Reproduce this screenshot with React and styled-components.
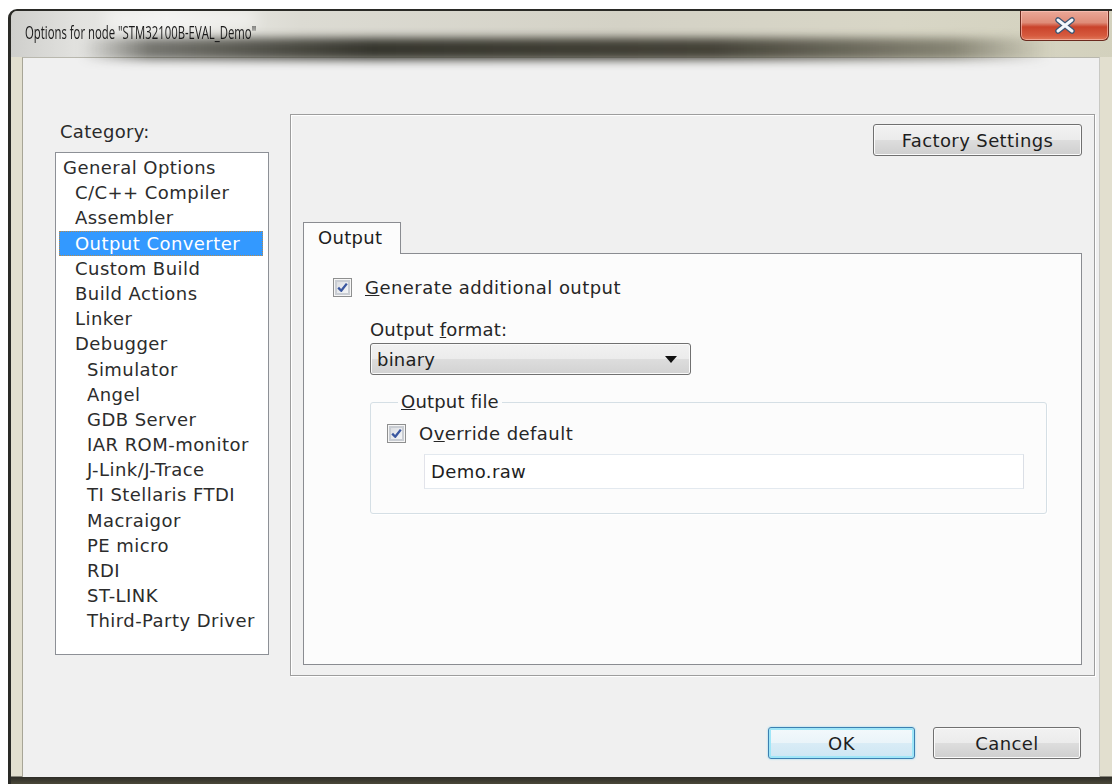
import React from 'react';
import styled, { createGlobalStyle } from 'styled-components';

const GlobalStyle = createGlobalStyle`
  html, body {
    margin: 0;
    padding: 0;
    background: #ffffff;
  }
  body {
    font-family: "DejaVu Sans", Verdana, sans-serif;
    overflow: hidden;
  }
`;

const categories = [
  { label: 'General Options', level: 0 },
  { label: 'C/C++ Compiler', level: 1 },
  { label: 'Assembler', level: 1 },
  { label: 'Output Converter', level: 1, selected: true },
  { label: 'Custom Build', level: 1 },
  { label: 'Build Actions', level: 1 },
  { label: 'Linker', level: 1 },
  { label: 'Debugger', level: 1 },
  { label: 'Simulator', level: 2 },
  { label: 'Angel', level: 2 },
  { label: 'GDB Server', level: 2 },
  { label: 'IAR ROM-monitor', level: 2 },
  { label: 'J-Link/J-Trace', level: 2 },
  { label: 'TI Stellaris FTDI', level: 2 },
  { label: 'Macraigor', level: 2 },
  { label: 'PE micro', level: 2 },
  { label: 'RDI', level: 2 },
  { label: 'ST-LINK', level: 2 },
  { label: 'Third-Party Driver', level: 2 },
];

export default function App() {
  return (
    <>
      <GlobalStyle />
      <Screen>
        <Window>
          <TitleBar>
            <Title>Options for node "STM32100B-EVAL_Demo"</Title>
            <CloseButton aria-label="Close">
              <svg width="24" height="17" viewBox="0 0 24 17">
                <path d="M5 3 L19 14 M19 3 L5 14" stroke="#3b5674" strokeWidth="5.5" strokeLinecap="round" />
                <path d="M5 3 L19 14 M19 3 L5 14" stroke="#f4f7fb" strokeWidth="3" strokeLinecap="round" />
              </svg>
            </CloseButton>
          </TitleBar>
          <FrameRow>
            <Client>
              <Body>
                <LeftColumn>
                  <Caption>Category:</Caption>
                  <ListBox>
                    {categories.map((c) => (
                      <ListItem key={c.label} $level={c.level} $selected={c.selected}>
                        {c.label}
                      </ListItem>
                    ))}
                  </ListBox>
                </LeftColumn>
                <SettingsPanel>
                  <PanelTop>
                    <PushButton $width={209}>Factory Settings</PushButton>
                  </PanelTop>
                  <TabStrip>
                    <Tab>Output</Tab>
                  </TabStrip>
                  <TabPage>
                    <CheckRow>
                      <CheckBox />
                      <span><u>G</u>enerate additional output</span>
                    </CheckRow>
                    <Indented>
                      <FieldLabel>Output <u>f</u>ormat:</FieldLabel>
                      <ComboBox>
                        <span>binary</span>
                        <ComboArrow />
                      </ComboBox>
                      <GroupBox>
                        <GroupLegend><u>O</u>utput file</GroupLegend>
                        <CheckRow>
                          <CheckBox />
                          <span>O<u>v</u>erride default</span>
                        </CheckRow>
                        <TextField>Demo.raw</TextField>
                      </GroupBox>
                    </Indented>
                  </TabPage>
                </SettingsPanel>
              </Body>
              <Footer>
                <PushButton $width={147} $default>OK</PushButton>
                <PushButton $width={148}>Cancel</PushButton>
              </Footer>
            </Client>
          </FrameRow>
        </Window>
      </Screen>
    </>
  );
}

function CheckBox() {
  return (
    <CheckFrame>
      <svg width="13" height="13" viewBox="0 0 13 13">
        <path d="M2.2 6.6 L5.2 9.8 L10.8 2.6" fill="none" stroke="#3a57a0" strokeWidth="2.3" strokeLinejoin="round" />
      </svg>
    </CheckFrame>
  );
}

function ComboArrow() {
  return (
    <svg width="12" height="7" viewBox="0 0 12 7">
      <path d="M0 0 H12 L6 7 Z" fill="#111" />
    </svg>
  );
}

const Screen = styled.div`
  width: 1112px;
  height: 784px;
  padding: 9px 0 0 8px;
  box-sizing: border-box;
  overflow: hidden;
`;

const Window = styled.div`
  width: 1112px;
  height: 775px;
  box-sizing: border-box;
  display: flex;
  flex-direction: column;
  border-top: 2px solid #2a2a26;
  border-left: 3px solid #2a2a26;
  border-radius: 9px 0 0 0;
  background: linear-gradient(to bottom, #dedcd0 0%, #e4e2d6 60%, #d9d7c8 100%);
  overflow: hidden;
`;

const TitleBar = styled.div`
  position: relative;
  height: 46px;
  flex-shrink: 0;
  display: flex;
  align-items: flex-start;
  justify-content: space-between;
  padding: 0 10px 0 14px;
  background: linear-gradient(to right, #cfcfcc 0%, #e2e2df 6%, #ededea 14%, #dcdbd3 26%, #d4d2c6 55%, #d8d6c6 80%, #d3d1bd 100%);

  &::before {
    content: '';
    position: absolute;
    left: 95px;
    width: 150px;
    top: 0;
    height: 16px;
    background: rgba(255, 255, 255, 0.55);
    filter: blur(8px);
    pointer-events: none;
  }

  &::after {
    content: '';
    position: absolute;
    left: 70px;
    right: 70px;
    bottom: -3px;
    height: 22px;
    background: linear-gradient(to right, rgba(40, 40, 32, 0) 0%, rgba(40, 40, 32, 0.6) 7%, rgba(30, 30, 22, 0.88) 30%, rgba(42, 40, 30, 0.85) 65%, rgba(70, 68, 52, 0.55) 90%, rgba(70, 68, 52, 0) 100%);
    filter: blur(5px);
    pointer-events: none;
  }
`;

const Title = styled.div`
  position: relative;
  z-index: 1;
  margin-top: 10px;
  font-family: "Open Sans", "Noto Sans", sans-serif;
  font-size: 18px;
  line-height: 22px;
  color: #1a1a1a;
  white-space: nowrap;
  transform: scaleX(0.63);
  transform-origin: left center;
`;

const CloseButton = styled.button`
  position: relative;
  z-index: 1;
  width: 89px;
  height: 30px;
  margin-right: 1px;
  padding: 0;
  border: 1px solid #6b2a1e;
  border-top: 0;
  border-radius: 0 0 6px 6px;
  background: linear-gradient(to bottom, #eaa898 0%, #df8c78 40%, #c9432b 55%, #d65a3e 85%, #e07a5c 100%);
  box-shadow: inset 0 0 0 1px rgba(255, 200, 190, 0.6);
  display: flex;
  align-items: center;
  justify-content: center;
`;

const FrameRow = styled.div`
  flex: 1;
  display: flex;
  padding: 0 0 7px 11px;
  background: linear-gradient(to bottom, #e2dfcf 0%, #e2dfcf calc(100% - 8px), #2e2d27 calc(100% - 7px), #4a4838 100%);
`;

const Client = styled.div`
  width: 1078px;
  height: 720px;
  box-sizing: border-box;
  display: flex;
  flex-direction: column;
  background: #f0f0f0;
  border-left: 1px solid #a7a596;
  border-right: 1px solid #c9c9c4;
  border-top: 1px solid #b9b8ae;
`;

const Body = styled.div`
  display: flex;
  align-items: flex-start;
`;

const LeftColumn = styled.div`
  width: 214px;
  margin-left: 32px;
  padding-top: 63px;
  display: flex;
  flex-direction: column;
`;

const Caption = styled.div`
  height: 22px;
  line-height: 22px;
  padding-left: 5px;
  font-size: 18px;
  letter-spacing: 0.3px;
  color: #2a2a2a;
`;

const ListBox = styled.div`
  margin-top: 9px;
  height: 503px;
  box-sizing: border-box;
  padding: 2px 5px 0 3px;
  background: #ffffff;
  border: 1px solid #8d9096;
`;

const ListItem = styled.div`
  height: 25.2px;
  line-height: 25.2px;
  box-sizing: border-box;
  padding-left: ${(p) => 4 + p.$level * 12}px;
  font-size: 18px;
  letter-spacing: 0.45px;
  white-space: nowrap;
  color: ${(p) => (p.$selected ? '#ffffff' : '#2c2c2c')};
  background: ${(p) => (p.$selected ? '#3399ff' : 'transparent')};
  outline: ${(p) => (p.$selected ? '1px dotted #b88a4a' : 'none')};
  outline-offset: -1px;
`;

const SettingsPanel = styled.div`
  width: 805px;
  height: 562px;
  margin-left: 21px;
  margin-top: 56px;
  box-sizing: border-box;
  padding: 9px 12px 10px 12px;
  display: flex;
  flex-direction: column;
  border: 1px solid #9d9d9d;
  box-shadow: inset 1px 1px 0 #ffffff, 1px 1px 0 #ffffff;
`;

const PanelTop = styled.div`
  display: flex;
  justify-content: flex-end;
`;

const PushButton = styled.button`
  width: ${(p) => p.$width}px;
  height: 32px;
  padding: 0;
  border-radius: 3px;
  font-family: "DejaVu Sans", Verdana, sans-serif;
  font-size: 18px;
  letter-spacing: 0.4px;
  color: #1e1e1e;
  border: 1px solid ${(p) => (p.$default ? '#3c7fb1' : '#707070')};
  background: ${(p) =>
    p.$default
      ? 'linear-gradient(to bottom, #f3f9fc 0%, #eaf4f9 50%, #d9ecf6 51%, #cde6f3 100%)'
      : 'linear-gradient(to bottom, #f2f2f2 0%, #ebebeb 50%, #dddddd 51%, #cfcfcf 100%)'};
  box-shadow: ${(p) =>
    p.$default ? 'inset 0 0 0 2px #9fe6f8, 0 0 2px #7fd6f0' : 'inset 0 0 0 1px #fbfbfb'};
`;

const TabStrip = styled.div`
  display: flex;
  margin-top: 66px;
  position: relative;
  z-index: 1;
`;

const Tab = styled.div`
  width: 98px;
  height: 32px;
  box-sizing: border-box;
  padding: 4px 0 0 14px;
  font-size: 18px;
  letter-spacing: 0.3px;
  color: #1e1e1e;
  background: #fcfcfc;
  border: 1px solid #8a8c91;
  border-bottom: 0;
  margin-bottom: -1px;
`;

const TabPage = styled.div`
  flex: 1;
  box-sizing: border-box;
  padding: 23px 0 0 29px;
  background: #fcfcfc;
  border: 1px solid #8a8c91;
`;

const CheckRow = styled.label`
  display: flex;
  align-items: center;
  gap: 13px;
  height: 20px;
  font-size: 18px;
  letter-spacing: 0.45px;
  color: #262626;
  white-space: nowrap;
`;

const CheckFrame = styled.span`
  width: 19px;
  height: 19px;
  flex-shrink: 0;
  box-sizing: border-box;
  display: flex;
  align-items: center;
  justify-content: center;
  border: 1px solid #8e8f8f;
  background: linear-gradient(135deg, #d6d8dc 0%, #eceef1 60%, #fafafa 100%);
  box-shadow: inset 0 0 0 1px #f6f6f6, inset 0 0 0 3px #c9cdd3;
`;

const Indented = styled.div`
  margin-left: 37px;
  margin-top: 22px;
  display: flex;
  flex-direction: column;
  align-items: flex-start;
`;

const FieldLabel = styled.div`
  height: 22px;
  line-height: 22px;
  font-size: 18px;
  letter-spacing: 0.2px;
  color: #262626;
`;

const ComboBox = styled.div`
  margin-top: 2px;
  width: 321px;
  height: 32px;
  box-sizing: border-box;
  display: flex;
  align-items: center;
  justify-content: space-between;
  padding: 0 13px 0 6px;
  border: 1px solid #707070;
  border-radius: 3px;
  background: linear-gradient(to bottom, #f2f2f2 0%, #ebebeb 50%, #dddddd 51%, #d2d2d2 100%);
  box-shadow: inset 0 0 0 1px #fafafa;
  font-size: 18px;
  letter-spacing: 0.2px;
  color: #1e1e1e;
`;

const GroupBox = styled.fieldset`
  margin: 17px 0 0 0;
  width: 677px;
  box-sizing: border-box;
  padding: 11px 0 24px 16px;
  border: 1px solid #d5dfe5;
  border-radius: 3px;
  box-shadow: 1px 1px 0 #ffffff;
`;

const GroupLegend = styled.legend`
  margin-left: 11px;
  padding: 0 3px;
  height: 20px;
  line-height: 20px;
  font-size: 18px;
  letter-spacing: 0.2px;
  color: #262626;
`;

const TextField = styled.div`
  margin: 11px 0 0 37px;
  width: 600px;
  height: 35px;
  box-sizing: border-box;
  padding: 0 0 0 6px;
  display: flex;
  align-items: center;
  border: 1px solid #abadb3;
  border-top-color: #e3e9ef;
  border-left-color: #e2e3ea;
  border-right-color: #dbdfe6;
  border-bottom-color: #e3e9ef;
  background: #ffffff;
  font-size: 18px;
  letter-spacing: 0.4px;
  color: #1e1e1e;
`;

const Footer = styled.div`
  display: flex;
  justify-content: flex-end;
  gap: 18px;
  margin-top: 51px;
  padding-right: 18px;
`;
